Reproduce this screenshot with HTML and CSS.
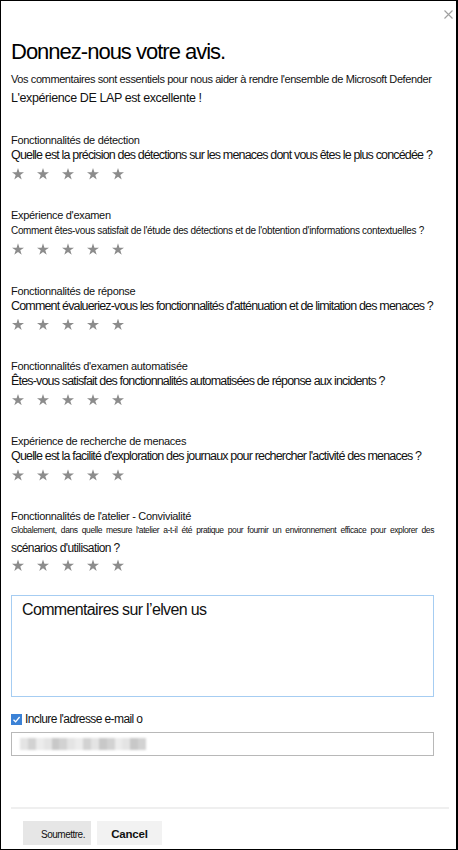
FILE: index.html
```html
<!DOCTYPE html>
<html lang="fr">
<head>
<meta charset="utf-8">
<title>Donnez-nous votre avis</title>
<link rel="stylesheet" href="styles.css">
</head>
<body>
<div class="panel">
  <button class="close" aria-label="Fermer">
    <svg width="9" height="9" viewBox="0 0 9 9"><path d="M0.5 0.5L8.5 8.5M8.5 0.5L0.5 8.5" stroke="#a0a0a0" stroke-width="1.1" fill="none"/></svg>
  </button>
  <h1 class="title">Donnez-nous votre avis.</h1>
  <p class="intro">Vos commentaires sont essentiels pour nous aider à rendre l'ensemble de Microsoft Defender</p>
  <p class="intro2">L'expérience DE LAP est excellente !</p>

  <div class="section">
    <div class="label">Fonctionnalités de détection</div>
    <div class="question">Quelle est la précision des détections sur les menaces dont vous êtes le plus concédée ?</div>
    <div class="stars"><span class="star"></span><span class="star"></span><span class="star"></span><span class="star"></span><span class="star"></span></div>
  </div>

  <div class="section">
    <div class="label">Expérience d'examen</div>
    <div class="question q-sm">Comment êtes-vous satisfait de l'étude des détections et de l'obtention d'informations contextuelles ?</div>
    <div class="stars"><span class="star"></span><span class="star"></span><span class="star"></span><span class="star"></span><span class="star"></span></div>
  </div>

  <div class="section">
    <div class="label">Fonctionnalités de réponse</div>
    <div class="question">Comment évalueriez-vous les fonctionnalités d'atténuation et de limitation des menaces ?</div>
    <div class="stars"><span class="star"></span><span class="star"></span><span class="star"></span><span class="star"></span><span class="star"></span></div>
  </div>

  <div class="section">
    <div class="label">Fonctionnalités d'examen automatisée</div>
    <div class="question">Êtes-vous satisfait des fonctionnalités automatisées de réponse aux incidents ?</div>
    <div class="stars"><span class="star"></span><span class="star"></span><span class="star"></span><span class="star"></span><span class="star"></span></div>
  </div>

  <div class="section">
    <div class="label">Expérience de recherche de menaces</div>
    <div class="question">Quelle est la facilité d'exploration des journaux pour rechercher l'activité des menaces ?</div>
    <div class="stars"><span class="star"></span><span class="star"></span><span class="star"></span><span class="star"></span><span class="star"></span></div>
  </div>

  <div class="section">
    <div class="label">Fonctionnalités de l'atelier - Convivialité</div>
    <div class="q-wrap">
      <span class="q-small-line">Globalement, dans quelle mesure l'atelier a-t-il été pratique pour fournir un environnement efficace pour explorer des</span>
      <span class="q-second-line">scénarios d'utilisation ?</span>
    </div>
    <div class="stars stars-last"><span class="star"></span><span class="star"></span><span class="star"></span><span class="star"></span><span class="star"></span></div>
  </div>

  <div class="comment-box">Commentaires sur l’elven us</div>

  <label class="check-row">
    <span class="checkbox"><svg width="9" height="9" viewBox="0 0 9 9"><path d="M1.5 4.8L3.6 6.8L7.6 2" stroke="#fff" stroke-width="1.3" fill="none"/></svg></span>
    <span class="check-label">Inclure l'adresse e-mail o</span>
  </label>

  <div class="email-input">
    <div class="blur">
      <span class="px p1"></span><span class="px p2"></span><span class="px p3"></span><span class="px p1"></span><span class="px p4"></span><span class="px p2"></span><span class="px p1"></span><span class="px p3"></span><span class="px p2"></span><span class="px p1"></span><span class="px p4"></span><span class="px p2"></span><span class="px p3"></span><span class="px p1"></span><span class="px p4"></span><span class="px p2"></span>
    </div>
  </div>

  <div class="spacer"></div>
  <div class="separator"></div>
  <div class="actions">
    <button class="btn btn-submit">Soumettre.</button>
    <button class="btn btn-cancel">Cancel</button>
  </div>
</div>
</body>
</html>
```

FILE: styles.css
```css
* { box-sizing: border-box; }
html, body { margin: 0; padding: 0; background: #fff; }
body { font-family: "Liberation Sans", Arial, sans-serif; color: #1a1a1a; }

.panel {
  position: relative;
  width: 458px;
  height: 850px;
  border: 1px solid #000;
  border-right-width: 2px;
  padding: 0 0 0 10px;
  display: flex;
  flex-direction: column;
}

.close {
  position: absolute;
  top: 8px;
  right: 2px;
  width: 11px;
  height: 11px;
  padding: 1px;
  border: 0;
  background: transparent;
  display: flex;
}

.title {
  margin: 38px 0 0;
  font-size: 22px;
  line-height: 26px;
  font-weight: normal;
  letter-spacing: -1px;
  color: #000;
}

.intro {
  margin: 5px 0 0;
  font-size: 11px;
  line-height: 18px;
  letter-spacing: -0.4px;
  color: #111;
}

.intro2 {
  margin: 1px 0 0;
  font-size: 12.5px;
  line-height: 18px;
  letter-spacing: -0.4px;
  color: #111;
}

.section {
  display: flex;
  flex-direction: column;
  margin-top: 26px;
}
.section + .section { margin-top: 26.3px; }

.label {
  font-size: 11px;
  line-height: 15px;
  letter-spacing: -0.3px;
  color: #111;
}

.question {
  font-size: 12.5px;
  line-height: 15px;
  letter-spacing: -0.83px;
  color: #111;
  white-space: nowrap;
}
.q-sm { font-size: 10px; letter-spacing: -0.33px; }

.q-wrap {
  display: flex;
  flex-direction: column;
  width: 423px;
  color: #111;
}
.q-small-line {
  display: block;
  font-size: 8.5px;
  line-height: 13px;
  letter-spacing: -0.4px;
  text-align: justify;
  text-align-last: justify;
  white-space: nowrap;
}
.q-second-line {
  display: block;
  margin-top: 2px;
  font-size: 12px;
  line-height: 18px;
  letter-spacing: -0.6px;
}

.stars {
  display: flex;
  gap: 13px;
  margin-top: 3px;
  height: 16px;
  align-items: center;
  padding-left: 1px;
}
.stars-last { margin-top: 0; }
.star {
  width: 12px;
  height: 12px;
  background: #8c8c8c;
  clip-path: polygon(50% 0%, 61.8% 36.2%, 100% 36.2%, 69.1% 58.8%, 80.9% 95.1%, 50% 72.7%, 19.1% 95.1%, 30.9% 58.8%, 0% 36.2%, 38.2% 36.2%);
}

.comment-box {
  margin-top: 22px;
  width: 423px;
  height: 102px;
  border: 1px solid #a6cdf2;
  padding: 4px 0 0 10px;
  font-size: 16px;
  line-height: 20px;
  letter-spacing: -0.65px;
  color: #111;
}

.check-row {
  display: flex;
  align-items: center;
  gap: 3px;
  margin-top: 15px;
  height: 14px;
}
.checkbox {
  width: 11px;
  height: 11px;
  background: #3b82d6;
  display: flex;
  align-items: center;
  justify-content: center;
}
.check-label {
  font-size: 12px;
  letter-spacing: -0.6px;
  color: #111;
}

.email-input {
  margin-top: 6px;
  width: 423px;
  height: 24px;
  border: 1px solid #b8b8b8;
  padding: 5px 0 0 8px;
}
.blur {
  display: flex;
  height: 12px;
  width: 126px;
  filter: blur(1.2px);
}
.px { flex: 1; height: 12px; }
.p1 { background: #e4e4e4; }
.p2 { background: #d2d2d2; }
.p3 { background: #ececec; }
.p4 { background: #c8c8c8; }

.spacer { flex: 1; }

.separator {
  width: 438px;
  height: 2px;
  background: #efefef;
}

.actions {
  display: flex;
  gap: 6px;
  padding: 12px 0 4px 12px;
}
.btn {
  height: 24px;
  border: 0;
  font-family: "Liberation Sans", Arial, sans-serif;
  color: #111;
}
.btn-submit {
  width: 68px;
  background: #e6e6e6;
  font-size: 10px;
  padding: 3px 0 0 12px;
  letter-spacing: -0.5px;
}
.btn-cancel {
  width: 65px;
  background: #f2f2f2;
  font-size: 11.5px;
  font-weight: bold;
  letter-spacing: -0.2px;
  padding-top: 2px;
}
```
